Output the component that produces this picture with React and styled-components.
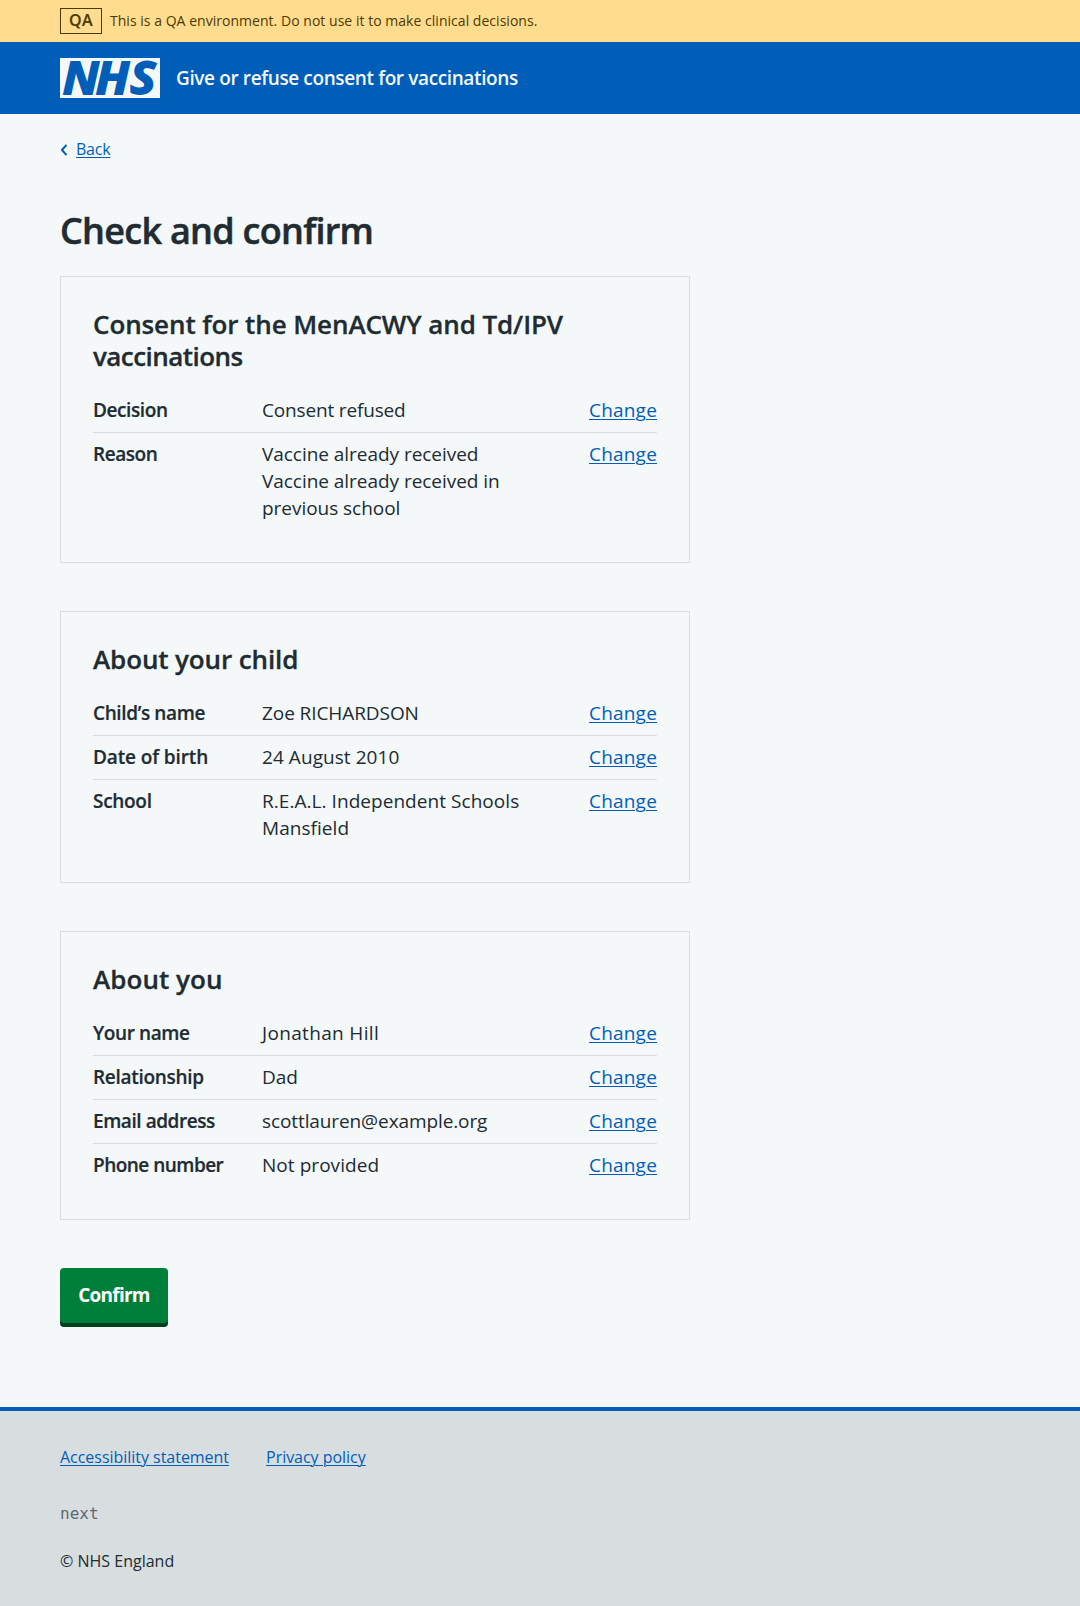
import React from "react";
import styled, { createGlobalStyle } from "styled-components";

const color = {
  blue: "#005eb8",
  text: "#212b32",
  page: "#f4f8f9",
  border: "#d8dde0",
  green: "#007f3b",
  greenDark: "#00401e",
  sand: "#ffdc8e",
  brown: "#4d3a00",
  muted: "#5b6a71",
};

const GlobalStyle = createGlobalStyle`
  * { box-sizing: border-box; }
  body {
    margin: 0;
    background: ${color.page};
    color: ${color.text};
    font: 400 19px/27px "Open Sans", "Noto Sans", sans-serif;
  }
`;

const Page = styled.div`
  display: flex;
  flex-direction: column;
  min-height: 1606px;
`;

const EnvironmentBar = styled.div`
  display: flex;
  align-items: center;
  gap: 8px;
  height: 42px;
  padding: 0 60px;
  background: ${color.sand};
  color: ${color.brown};
  font-size: 14px;
  line-height: 24px;
  letter-spacing: 0.03px;
`;

const EnvironmentTag = styled.strong`
  width: 42px;
  height: 26px;
  border: 1px solid ${color.brown};
  font-size: 16px;
  font-weight: 600;
  line-height: 23px;
  letter-spacing: 0.3px;
  text-align: center;
  -webkit-text-stroke: 0.2px currentColor;
`;

const Header = styled.header`
  display: flex;
  align-items: center;
  gap: 16px;
  height: 72px;
  padding: 0 60px;
  background: ${color.blue};
`;

const Logo = styled.svg`
  display: block;
  width: 100px;
  height: 40px;
  overflow: visible;
  background: ${color.page};
`;

const LogoText = styled.text`
  fill: ${color.blue};
  stroke: ${color.blue};
  stroke-width: 3.5px;
  font: italic 700 88px "Open Sans", sans-serif;
`;

const ServiceName = styled.span`
  color: ${color.page};
  font-weight: 600;
  letter-spacing: -0.38px;
`;

const Main = styled.main`
  display: flex;
  flex-direction: column;
  align-items: flex-start;
  flex: 1;
  padding: 23px 60px 0;
`;

const Link = styled.a`
  color: ${color.blue};
  letter-spacing: ${(p) => p.$tracking || 0}px;
  text-decoration: underline;
  text-decoration-thickness: 1px;
  text-underline-offset: 2px;
`;

const BackNav = styled.nav`
  display: flex;
  align-items: center;
  gap: 8px;
  height: 24px;
  font-size: 16px;
  line-height: 24px;
`;

const Chevron = styled.svg`
  width: 8px;
  height: 12px;
  margin-top: 2px;
  fill: none;
  stroke: ${color.blue};
  stroke-width: 2;
  stroke-linejoin: round;
`;

const Title = styled.h1`
  margin: 47px 0 23px;
  font-size: 36px;
  font-weight: 600;
  line-height: 45px;
  letter-spacing: -0.72px;
  -webkit-text-stroke: 0.5px currentColor;
`;

const Card = styled.section`
  width: 630px;
  margin-bottom: 48px;
  padding: 31px 32px 32px;
  border: 1px solid ${color.border};
`;

const CardTitle = styled.h2`
  margin: 0 0 17px;
  font-size: 26px;
  font-weight: 600;
  line-height: 32px;
  letter-spacing: ${(p) => p.$tracking || 0}px;
  -webkit-text-stroke: 0.3px currentColor;
`;

const TitleLine = styled.span`
  display: block;
  letter-spacing: ${(p) => p.$tracking}px;
`;

const SummaryList = styled.dl`
  margin: 0;
`;

const SummaryRow = styled.div`
  display: grid;
  grid-template-columns: 169px 266px 1fr;
  padding: 8px 0;
  border-bottom: 1px solid ${color.border};

  &:last-child {
    border-bottom: 0;
  }
`;

const Key = styled.dt`
  font-weight: 600;
  letter-spacing: ${(p) => p.$tracking || 0}px;
  -webkit-text-stroke: 0.2px currentColor;
`;

const Value = styled.dd`
  margin: 0;
  letter-spacing: ${(p) => p.$tracking || 0}px;
`;

const Action = styled.dd`
  margin: 0;
  text-align: right;
`;

const ConfirmButton = styled.button`
  width: 108px;
  height: 55px;
  padding: 0;
  border: 0;
  border-radius: 4px;
  background: ${color.green};
  box-shadow: 0 4px 0 ${color.greenDark};
  color: #fff;
  font: inherit;
  font-weight: 700;
  letter-spacing: -0.75px;
`;

const Footer = styled.footer`
  display: flex;
  flex-direction: column;
  height: 199px;
  padding: 34px 60px 0;
  border-top: 4px solid ${color.blue};
  background: ${color.border};
  font-size: 16px;
  line-height: 24px;
`;

const FooterLinks = styled.nav`
  display: flex;
  gap: 37px;
`;

const Version = styled.code`
  margin-top: 33px;
  color: ${color.muted};
  font: 16px/24px "DejaVu Sans Mono", monospace;
`;

const Copyright = styled.span`
  margin-top: 23px;
`;

const cards = [
  {
    title: "Consent for the MenACWY and Td/IPV",
    titleTracking: -0.1,
    titleEnd: "vaccinations",
    rows: [
      { key: "Decision", tracking: -0.4, lines: ["Consent refused"], valueTracking: -0.16 },
      {
        key: "Reason",
        tracking: -0.45,
        lines: ["Vaccine already received", "Vaccine already received in previous school"],
        valueTracking: -0.04,
      },
    ],
  },
  {
    title: "About your child",
    titleTracking: -0.12,
    rows: [
      { key: "Child’s name", tracking: -0.38, lines: ["Zoe RICHARDSON"], valueTracking: -0.08 },
      { key: "Date of birth", tracking: -0.12, lines: ["24 August 2010"], valueTracking: 0.06 },
      { key: "School", tracking: -0.3, lines: ["R.E.A.L. Independent Schools Mansfield"], valueTracking: 0.05 },
    ],
  },
  {
    title: "About you",
    titleTracking: 0.05,
    rows: [
      { key: "Your name", tracking: -0.4, lines: ["Jonathan Hill"], valueTracking: 0.34 },
      { key: "Relationship", tracking: -0.3, lines: ["Dad"] },
      { key: "Email address", tracking: -0.44, lines: ["scottlauren@example.org"], valueTracking: -0.1 },
      { key: "Phone number", tracking: -0.52, lines: ["Not provided"], valueTracking: 0.05 },
    ],
  },
];

export default function App() {
  return (
    <Page>
      <GlobalStyle />
      <EnvironmentBar>
        <EnvironmentTag>QA</EnvironmentTag>
        <span>This is a QA environment. Do not use it to make clinical decisions.</span>
      </EnvironmentBar>
      <Header>
        <Logo viewBox="0 0 200 80" role="img">
          <LogoText x="5 66 130" y="71.5" transform="scale(1.08 1)">NHS</LogoText>
        </Logo>
        <ServiceName>Give or refuse consent for vaccinations</ServiceName>
      </Header>
      <Main>
        <BackNav>
          <Chevron viewBox="0 0 8 12">
            <path d="M6.5 0.8 2 6 6.5 11.2" />
          </Chevron>
          <Link href="#" $tracking={-0.25}>Back</Link>
        </BackNav>
        <Title>Check and confirm</Title>
        {cards.map((card) => (
          <Card key={card.title}>
            <CardTitle $tracking={card.titleTracking}>
              {card.title}
              {card.titleEnd && <TitleLine $tracking={-0.55}>{card.titleEnd}</TitleLine>}
            </CardTitle>
            <SummaryList>
              {card.rows.map((row) => (
                <SummaryRow key={row.key}>
                  <Key $tracking={row.tracking}>{row.key}</Key>
                  <Value $tracking={row.valueTracking}>
                    {row.lines.map((line) => (
                      <div key={line}>{line}</div>
                    ))}
                  </Value>
                  <Action>
                    <Link href="#" $tracking={0.2}>Change</Link>
                  </Action>
                </SummaryRow>
              ))}
            </SummaryList>
          </Card>
        ))}
        <ConfirmButton type="button">Confirm</ConfirmButton>
      </Main>
      <Footer>
        <FooterLinks>
          <Link href="#" $tracking={-0.03}>Accessibility statement</Link>
          <Link href="#" $tracking={-0.03}>Privacy policy</Link>
        </FooterLinks>
        <Version>next</Version>
        <Copyright>© NHS England</Copyright>
      </Footer>
    </Page>
  );
}
